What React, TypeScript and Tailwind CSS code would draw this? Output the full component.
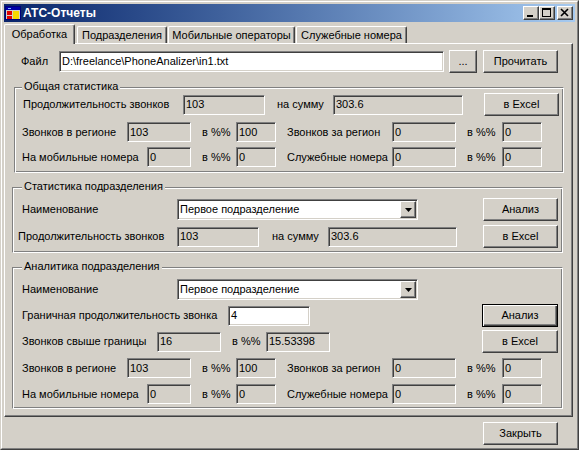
import type { ReactNode } from 'react';

const sunken =
  'border border-t-[#808080] border-l-[#808080] border-r-white border-b-white shadow-[inset_1px_1px_0_#404040,inset_-1px_-1px_0_#d4d0c8]';
const raised =
  'border border-t-white border-l-white border-r-[#404040] border-b-[#404040] shadow-[inset_-1px_-1px_0_#808080]';
const etched =
  'border border-t-[#808080] border-l-[#808080] border-r-white border-b-white shadow-[inset_1px_1px_0_white,inset_-1px_-1px_0_#808080]';

type Props = { className?: string; children?: ReactNode };

function Label({ className = '', children }: Props) {
  return <div className={`shrink-0 whitespace-nowrap leading-[13px] ${className}`}>{children}</div>;
}

function Field({ className = '', white = false, children }: Props & { white?: boolean }) {
  return (
    <div
      className={`flex shrink-0 items-center overflow-hidden whitespace-nowrap pl-[2px] ${
        white ? 'bg-white' : 'bg-[#d4d0c8]'
      } ${sunken} ${className}`}
    >
      {children}
    </div>
  );
}

function Btn({ className = '', isDefault = false, children }: Props & { isDefault?: boolean }) {
  const edge = isDefault
    ? 'border border-black shadow-[inset_1px_1px_0_white,inset_-1px_-1px_0_#404040,inset_-2px_-2px_0_#808080]'
    : raised;
  return (
    <div className={`flex h-[23px] shrink-0 items-center justify-center bg-[#d4d0c8] ${edge} ${className}`}>
      {children}
    </div>
  );
}

function Combo({ value }: { value: string }) {
  return (
    <div className={`flex h-[21px] w-[241px] shrink-0 items-center bg-white pl-[2px] pr-[1px] ${sunken}`}>
      <span className="flex-1 whitespace-nowrap">{value}</span>
      <div className={`flex h-[17px] w-[16px] items-center justify-center bg-[#d4d0c8] ${raised}`}>
        <svg width="7" height="4" viewBox="0 0 7 4">
          <polygon points="0,0 7,0 3.5,4" fill="#000" />
        </svg>
      </div>
    </div>
  );
}

function Group({ title, className = '', titleClass = '', children }: Props & { title: string; titleClass?: string }) {
  return (
    <div className={`flex shrink-0 flex-col ${etched} ${className}`}>
      <div className={`-mt-[8px] w-fit bg-[#d4d0c8] px-[2px] leading-[13px] ${titleClass}`}>{title}</div>
      {children}
    </div>
  );
}

function RegionRow({ first, label, wide, a, pa, label2, b, pb, className = '' }: {
  first: string;
  label: string;
  wide: string;
  a: string;
  pa: string;
  label2: string;
  b: string;
  pb: string;
  className?: string;
}) {
  return (
    <div className={`flex h-[20px] items-center ${className}`}>
      <Label className={`${first} ${wide}`}>{label}</Label>
      <Field className={`h-[20px] ${wide === 'w-[105px]' ? 'w-[64px]' : 'w-[44px]'}`}>{a}</Field>
      <Label className="ml-[11px] w-[34px]">в %%</Label>
      <Field className="h-[20px] w-[40px]">{pa}</Field>
      <Label className="ml-[11px] w-[105px]">{label2}</Label>
      <Field className="h-[20px] w-[64px]">{b}</Field>
      <Label className="ml-[11px] w-[35px]">в %%</Label>
      <Field className="h-[20px] w-[40px]">{pb}</Field>
    </div>
  );
}

function AppIcon() {
  return (
    <svg width="16" height="16" viewBox="0 0 16 16" className="shrink-0">
      <rect x="0.5" y="1.5" width="15" height="13" fill="#d4d0c8" stroke="#00007b" />
      <rect x="1" y="2" width="14" height="3" fill="#0000a8" />
      <rect x="2" y="6" width="5" height="4" fill="#e00000" />
      <rect x="2" y="11" width="5" height="3" fill="#e00000" />
      <rect x="8" y="6" width="6" height="8" fill="#f8d800" />
      <rect x="3" y="3" width="3" height="1" fill="#7fb8ff" />
    </svg>
  );
}

function CaptionBtn({ children, className = '' }: Props) {
  return (
    <div className={`flex h-[14px] w-[16px] shrink-0 bg-[#d4d0c8] ${raised} ${className}`}>{children}</div>
  );
}

export default function App() {
  return (
    <div className="h-[450px] w-[579px] select-none bg-[#d4d0c8] font-['Liberation_Sans',Arial,sans-serif] text-[11px] text-black">
      <div className="h-full w-full border border-t-[#d4d0c8] border-l-[#d4d0c8] border-r-[#404040] border-b-[#404040]">
        <div className="flex h-full w-full flex-col border border-t-white border-l-white border-r-[#808080] border-b-[#808080] p-[2px]">
          {/* title bar */}
          <div className="flex h-[18px] shrink-0 items-center bg-gradient-to-r from-[#0a246a] to-[#a6caf0] pl-[1px] pr-[2px]">
            <AppIcon />
            <span className="ml-[2px] flex-1 text-[12px] font-bold text-white">АТС-Отчеты</span>
            <CaptionBtn>
              <svg width="14" height="12" viewBox="0 0 14 12">
                <rect x="3" y="8" width="6" height="2" fill="#000" />
              </svg>
            </CaptionBtn>
            <CaptionBtn>
              <svg width="14" height="12" viewBox="0 0 14 12">
                <rect x="2" y="1" width="9" height="9" fill="#000" />
                <rect x="3" y="3" width="7" height="6" fill="#d4d0c8" />
              </svg>
            </CaptionBtn>
            <CaptionBtn className="ml-[2px]">
              <svg width="14" height="12" viewBox="0 0 14 12">
                <path d="M3 2 L10 9 M10 2 L3 9" stroke="#000" strokeWidth="1.6" />
              </svg>
            </CaptionBtn>
          </div>

          {/* tabs */}
          <div className="mt-[2px] flex h-[19px] shrink-0 items-end gap-[1px]">
            <div className="relative z-10 -mb-[1px] flex h-[20px] w-[71px] items-center justify-center rounded-t-[2px] border-l border-t border-r border-l-white border-t-white border-r-[#404040] bg-[#d4d0c8] shadow-[inset_-1px_0_0_#808080]">
              Обработка
            </div>
            <div className="ml-[1px] flex h-[17px] w-[90px] items-center justify-center rounded-t-[2px] border-l border-t border-r border-l-white border-t-white border-r-[#404040] shadow-[inset_-1px_0_0_#808080]">
              Подразделения
            </div>
            <div className="flex h-[17px] w-[127px] items-center justify-center rounded-t-[2px] border-l border-t border-r border-l-white border-t-white border-r-[#404040] shadow-[inset_-1px_0_0_#808080]">
              Мобильные операторы
            </div>
            <div className="flex h-[17px] w-[111px] items-center justify-center rounded-t-[2px] border-l border-t border-r border-l-white border-t-white border-r-[#404040] shadow-[inset_-1px_0_0_#808080]">
              Служебные номера
            </div>
          </div>

          {/* tab page */}
          <div className={`flex h-[374px] w-[569px] shrink-0 flex-col ${raised}`}>
            <div className="mt-[6px] flex h-[23px] items-center">
              <Label className="ml-[16px] w-[38px]">Файл</Label>
              <Field white className="h-[21px] w-[385px]">D:\freelance\PhoneAnalizer\in1.txt</Field>
              <Btn className="ml-[5px] w-[28px]">...</Btn>
              <Btn className="ml-[6px] w-[75px]">Прочитать</Btn>
            </div>

            <Group title="Общая статистика" className="ml-[9px] mt-[14px] h-[86px] w-[550px]" titleClass="ml-[7px]">
              <div className="flex h-[23px] items-center">
                <Label className="ml-[8px] w-[160px]">Продолжительность звонков</Label>
                <Field className="h-[20px] w-[82px]">103</Field>
                <Label className="ml-[12px] w-[56px]">на сумму</Label>
                <Field className="h-[20px] w-[130px]">303.6</Field>
                <Btn className="ml-[21px] w-[75px]">в Excel</Btn>
              </div>
              <RegionRow
                className="mt-[6px]"
                first="ml-[7px]"
                label="Звонков в регионе"
                wide="w-[105px]"
                a="103"
                pa="100"
                label2="Звонков за регион"
                b="0"
                pb="0"
              />
              <RegionRow
                className="mt-[5px]"
                first="ml-[7px]"
                label="На мобильные номера"
                wide="w-[125px]"
                a="0"
                pa="0"
                label2="Служебные номера"
                b="0"
                pb="0"
              />
            </Group>

            <Group title="Статистика подразделения" className="ml-[7px] mt-[14px] h-[66px] w-[551px]" titleClass="ml-[9px]">
              <div className="mt-[5px] flex h-[23px] items-center">
                <Label className="ml-[9px] w-[155px]">Наименование</Label>
                <Combo value="Первое подразделение" />
                <Btn className="ml-[65px] w-[75px]">Анализ</Btn>
              </div>
              <div className="mt-[4px] flex h-[23px] items-center">
                <Label className="ml-[5px] w-[159px]">Продолжительность звонков</Label>
                <Field className="h-[20px] w-[82px]">103</Field>
                <Label className="ml-[13px] w-[56px]">на сумму</Label>
                <Field className="h-[20px] w-[129px]">303.6</Field>
                <Btn className="ml-[26px] w-[75px]">в Excel</Btn>
              </div>
            </Group>

            <Group title="Аналитика подразделения" className="ml-[7px] mt-[14px] h-[142px] w-[551px]" titleClass="ml-[9px]">
              <div className="mt-[6px] flex h-[21px] items-center">
                <Label className="ml-[9px] w-[155px]">Наименование</Label>
                <Combo value="Первое подразделение" />
              </div>
              <div className="mt-[4px] flex h-[23px] items-center">
                <Label className="ml-[9px] w-[206px]">Граничная продолжительность звонка</Label>
                <Field white className="h-[20px] w-[82px]">4</Field>
                <Btn isDefault className="ml-[172px] w-[76px]">Анализ</Btn>
              </div>
              <div className="mt-[3px] flex h-[23px] items-center">
                <Label className="ml-[9px] w-[135px]">Звонков свыше границы</Label>
                <Field className="h-[20px] w-[64px]">16</Field>
                <Label className="ml-[11px] w-[34px]">в %%</Label>
                <Field className="h-[20px] w-[64px]">15.53398</Field>
                <Btn className="ml-[152px] w-[76px]">в Excel</Btn>
              </div>
              <RegionRow
                className="mt-[5px]"
                first="ml-[9px]"
                label="Звонков в регионе"
                wide="w-[105px]"
                a="103"
                pa="100"
                label2="Звонков за регион"
                b="0"
                pb="0"
              />
              <RegionRow
                className="mt-[6px]"
                first="ml-[9px]"
                label="На мобильные номера"
                wide="w-[125px]"
                a="0"
                pa="0"
                label2="Служебные номера"
                b="0"
                pb="0"
              />
            </Group>
          </div>

          <div className="mt-[5px] flex">
            <Btn className="ml-[479px] w-[75px]">Закрыть</Btn>
          </div>
        </div>
      </div>
    </div>
  );
}
